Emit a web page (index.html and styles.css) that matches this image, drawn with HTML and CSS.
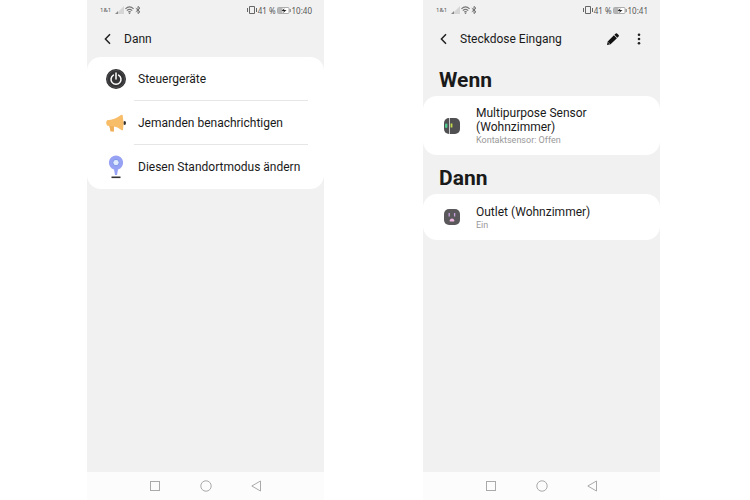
FILE: index.html
```
<!DOCTYPE html>
<html lang="de">
<head>
    <meta charset="UTF-8">
    <meta name="viewport" content="width=device-width, initial-scale=1.0">
    <title>Steckdose Eingang</title>
    <link rel="stylesheet" href="styles.css">
</head>
<body>
    <!-- Gemeinsame Symbole -->
    <svg class="symbols" aria-hidden="true">
        <symbol id="signal" viewBox="0 0 9 8">
            <path d="M1 8 L9 0 V8 Z" fill="#d6d6d6"/>
            <path d="M0 8 L3 5 V8 Z" fill="#8a8a8a"/>
        </symbol>
        <symbol id="wifi" viewBox="0 0 9 8">
            <path d="M0.4 2.8 Q4.5 -1 8.6 2.8 M1.8 4.6 Q4.5 2 7.2 4.6 M3.2 6.2 Q4.5 5 5.8 6.2" fill="none" stroke="#777" stroke-width="1.1"/>
            <circle cx="4.5" cy="7.2" r="0.8" fill="#777"/>
        </symbol>
        <symbol id="bluetooth" viewBox="0 0 6 8">
            <path d="M0.8 2.2 L5 5.8 L3 7.6 V0.4 L5 2.2 L0.8 5.8" fill="none" stroke="#666" stroke-width="0.9"/>
        </symbol>
        <symbol id="vibrate" viewBox="0 0 10 8">
            <path d="M2.5 0.5 H7.5 V7.5 H2.5 Z M0.5 2 V6 M9.5 2 V6" fill="none" stroke="#666" stroke-width="1"/>
        </symbol>
        <symbol id="battery" viewBox="0 0 14 7">
            <rect x="0.5" y="0.5" width="11.5" height="6" rx="1" fill="#fff" stroke="#999" stroke-width="0.8"/>
            <rect x="1" y="1" width="4.5" height="5" fill="#b5b5b5"/>
            <path d="M4.5 4 L7.5 1.2 L7 3 H9.5 L6.2 6 L6.8 4 Z" fill="#222"/>
            <path d="M13.2 2 V5" stroke="#777" stroke-width="1"/>
        </symbol>
        <symbol id="back" viewBox="0 0 12 12">
            <path d="M8 1.2 L3.4 6 L8 10.8" fill="none" stroke="#222" stroke-width="1.5"/>
        </symbol>
        <symbol id="recent" viewBox="0 0 12 12">
            <rect x="1.5" y="1.5" width="9" height="9" fill="none" stroke="#aaa"/>
        </symbol>
        <symbol id="home" viewBox="0 0 12 12">
            <circle cx="6" cy="6" r="5.2" fill="none" stroke="#aaa"/>
        </symbol>
        <symbol id="return" viewBox="0 0 12 12">
            <path d="M9.5 1 V11 L0.8 6 Z" fill="none" stroke="#aaa"/>
        </symbol>
    </svg>

    <main class="screens">
        <section class="phone">
            <div class="status">
                <span class="carrier">1&amp;1</span>
                <svg class="signal"><use href="#signal"/></svg>
                <svg class="wifi"><use href="#wifi"/></svg>
                <svg class="bluetooth"><use href="#bluetooth"/></svg>
                <svg class="vibrate"><use href="#vibrate"/></svg>
                <span>41 %</span>
                <svg class="battery"><use href="#battery"/></svg>
                <span>10:40</span>
            </div>
            <header class="toolbar">
                <button type="button" aria-label="Zurück"><svg class="icon"><use href="#back"/></svg></button>
                <h1>Dann</h1>
            </header>
            <ul class="card menu">
                <li>
                    <button type="button" class="row">
                        <svg class="row-icon" viewBox="0 0 22 24">
                            <circle cx="11" cy="12" r="10" fill="#333335"/>
                            <circle cx="11" cy="12" r="8.6" fill="none" stroke="#4b4b4e" stroke-width="1"/>
                            <path d="M8.4 8.1 A5 5 0 1 0 13.6 8.1 M11 6.1 V12" fill="none" stroke="#fff" stroke-width="1.5" stroke-linecap="round"/>
                        </svg>
                        <span class="label">Steuergeräte</span>
                    </button>
                </li>
                <li>
                    <button type="button" class="row">
                        <svg class="row-icon" viewBox="0 0 22 24">
                            <ellipse cx="19.6" cy="12" rx="1.4" ry="2" fill="#333"/>
                            <path d="M2 9.2 Q10 8.8 15.5 4.2 Q17 3.2 17.6 4 Q19.4 12 18 19 Q17.4 19.8 16 18.8 Q12.5 16 9 15.6 L8.8 20.6 L5.6 20.2 L4.4 15 L2.4 14.8 Q0.2 12 2 9.2 Z" fill="#f8bd68"/>
                            <path d="M9 15.6 L8.8 20.6 L5.6 20.2 L4.4 15 Z" fill="#f0af5c"/>
                        </svg>
                        <span class="label">Jemanden benachrichtigen</span>
                    </button>
                </li>
                <li>
                    <button type="button" class="row">
                        <svg class="row-icon" viewBox="0 0 22 24">
                            <path d="M11 0.5 A7.2 7.2 0 0 1 13 14.6 L12 20 H10 L9 14.6 A7.2 7.2 0 0 1 11 0.5 Z" fill="#98a2f5"/>
                            <circle cx="11" cy="7.6" r="3.2" fill="#dfeafd" stroke="#7e96e8" stroke-width="1"/>
                            <path d="M6.5 22.3 H15.5" stroke="#333" stroke-width="1.6"/>
                        </svg>
                        <span class="label">Diesen Standortmodus ändern</span>
                    </button>
                </li>
            </ul>
            <nav class="navbar">
                <button type="button" aria-label="Übersicht"><svg class="icon"><use href="#recent"/></svg></button>
                <button type="button" aria-label="Startseite"><svg class="icon"><use href="#home"/></svg></button>
                <button type="button" aria-label="Zurück"><svg class="icon"><use href="#return"/></svg></button>
            </nav>
        </section>

        <section class="phone">
            <div class="status">
                <span class="carrier">1&amp;1</span>
                <svg class="signal"><use href="#signal"/></svg>
                <svg class="wifi"><use href="#wifi"/></svg>
                <svg class="bluetooth"><use href="#bluetooth"/></svg>
                <svg class="vibrate"><use href="#vibrate"/></svg>
                <span>41 %</span>
                <svg class="battery"><use href="#battery"/></svg>
                <span>10:41</span>
            </div>
            <header class="toolbar">
                <button type="button" aria-label="Zurück"><svg class="icon"><use href="#back"/></svg></button>
                <h1>Steckdose Eingang</h1>
                <button type="button" aria-label="Bearbeiten">
                    <svg class="icon" viewBox="0 0 12 12">
                        <path d="M0 12 L0.7 8.4 L6.9 2.2 L9.9 5.2 L3.6 11.3 Z M7.4 1.8 L8.8 0.5 Q9.4 0 10 0.5 L11.6 2.1 Q12.2 2.8 11.6 3.4 L10.3 4.8 Z" fill="#111"/>
                        <path d="M1.2 9.4 L2.6 10.8" stroke="#f1f1f1" stroke-width="0.6"/>
                    </svg>
                </button>
                <button type="button" aria-label="Mehr">
                    <svg class="icon" viewBox="0 0 12 12">
                        <circle cx="6" cy="1.8" r="1.3" fill="#222"/>
                        <circle cx="6" cy="6" r="1.3" fill="#222"/>
                        <circle cx="6" cy="10.2" r="1.3" fill="#222"/>
                    </svg>
                </button>
            </header>
            <h2>Wenn</h2>
            <article class="card device">
                <svg class="device-icon" viewBox="0 0 18 18">
                    <rect x="1" y="1" width="16" height="16" rx="5" fill="#505052"/>
                    <path d="M6.5 1 V17" stroke="#c8c8c8" stroke-width="1"/>
                    <rect x="2" y="6.5" width="2.4" height="4.5" rx="1" fill="#4fc98f"/>
                    <rect x="7.6" y="6.5" width="1.8" height="4" fill="#c2dc4c"/>
                </svg>
                <div class="device-text">
                    <h3>Multipurpose Sensor (Wohnzimmer)</h3>
                    <p>Kontaktsensor: Offen</p>
                </div>
            </article>
            <h2>Dann</h2>
            <article class="card device">
                <svg class="device-icon" viewBox="0 0 18 18">
                    <rect x="1" y="1" width="16" height="16" rx="5" fill="#5a585b"/>
                    <path d="M6.2 5 V8.4 M11.6 5 V8.4" stroke="#c6a0dc" stroke-width="1.3"/>
                    <path d="M6.8 13.6 V12.2 Q7 10.4 9 10.4 Q11 10.4 11.2 12.2 V13.6 Z" fill="#efb6e2"/>
                </svg>
                <div class="device-text">
                    <h3>Outlet (Wohnzimmer)</h3>
                    <p>Ein</p>
                </div>
            </article>
            <nav class="navbar">
                <button type="button" aria-label="Übersicht"><svg class="icon"><use href="#recent"/></svg></button>
                <button type="button" aria-label="Startseite"><svg class="icon"><use href="#home"/></svg></button>
                <button type="button" aria-label="Zurück"><svg class="icon"><use href="#return"/></svg></button>
            </nav>
        </section>
    </main>
</body>
</html>
```
FILE: styles.css
```
* {
    box-sizing: border-box;
}

body {
    font-family: Roboto, sans-serif;
    font-size: 12px;
    color: #1a1a1a;
    background-color: white;
    margin: 0;
}

h1, h2, h3, p, ul {
    margin: 0;
    padding: 0;
}

button {
    font: inherit;
    color: inherit;
    background: none;
    border: none;
    padding: 0;
    cursor: pointer;
}

svg {
    display: block;
    flex: none;
}

.symbols {
    display: none;
}

.screens {
    display: grid;
    grid-template-columns: 1fr 1fr;
    gap: 99px;
    padding: 0 90px 0 87px;
    min-height: 100vh;
}

.phone {
    display: flex;
    flex-direction: column;
    background-color: #f1f1f1;
}

.icon {
    width: 12px;
    height: 12px;
}

/* Statusleiste */
.status {
    display: flex;
    align-items: center;
    gap: 1px;
    height: 20px;
    padding: 0 12px 0 13px;
    font-family: "Noto Sans", sans-serif;
    font-size: 8px;
    color: #555;
}

.carrier {
    font-size: 6px;
    margin-right: 3px;
}

.signal {
    width: 9px;
    height: 8px;
}

.wifi {
    width: 9px;
    height: 8px;
}

.bluetooth {
    width: 6px;
    height: 8px;
}

.vibrate {
    width: 10px;
    height: 8px;
    margin-left: auto;
}

.battery {
    width: 14px;
    height: 7px;
}

/* Kopfzeile */
.toolbar {
    display: flex;
    align-items: center;
    gap: 14px;
    height: 37px;
    padding: 0 15px;
}

.toolbar h1 {
    flex: 1;
    margin-left: -4px;
    font-size: 12px;
    font-weight: 400;
}

.card {
    background-color: white;
    border-radius: 14px;
}

/* Auswahlliste */
.menu {
    list-style: none;
}

.row {
    display: flex;
    align-items: center;
    gap: 7px;
    width: 100%;
    padding: 0 16px 0 18px;
    text-align: left;
}

.row-icon {
    width: 22px;
    height: 24px;
}

.label {
    flex: 1;
    padding: 2px 0 0 4px;
    line-height: 41px;
    border-bottom: 1px solid #e6e6e6;
}

.menu li:last-child .label {
    border-color: transparent;
}

/* Ablauf */
h2 {
    padding: 8px 16px 0;
    font-size: 21px;
    line-height: 31px;
    font-weight: 700;
}

.device {
    display: flex;
    align-items: center;
    gap: 15px;
    min-height: 46px;
    padding: 8px 50px 8px 20px;
}

.device-icon {
    width: 18px;
    height: 18px;
}

.device-text {
    padding-top: 2px;
}

.device h3 {
    font-size: 12px;
    line-height: 14px;
    font-weight: 400;
}

.device p {
    font-size: 9px;
    line-height: 13px;
    color: #999;
}

/* Navigationsleiste */
.navbar {
    display: flex;
    justify-content: center;
    align-items: center;
    gap: 39px;
    height: 28px;
    margin-top: auto;
    background-color: #fcfcfc;
}
```
